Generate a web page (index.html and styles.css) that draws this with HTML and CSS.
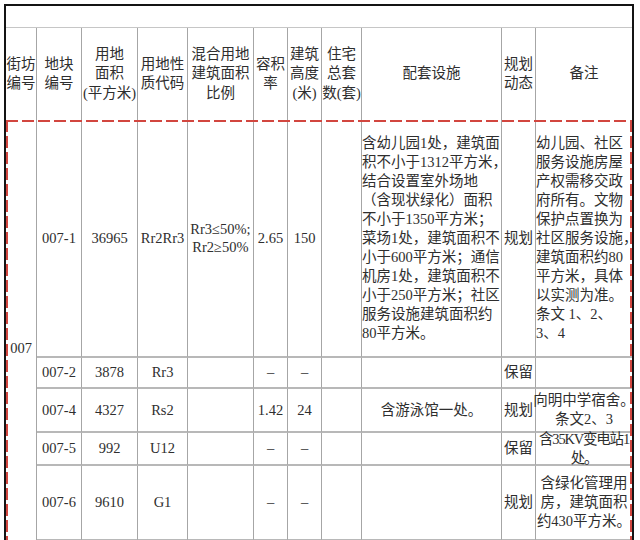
FILE: index.html
```html
<!DOCTYPE html>
<html lang="zh">
<head>
<meta charset="utf-8">
<title>地块规划表</title>
<link rel="stylesheet" href="styles.css">
</head>
<body>
<div class="sheet">
  <div class="blank"></div>
  <div class="hdr">
    <div><div class="t">街坊<br>编号</div></div>
    <div><div class="t">地块<br>编号</div></div>
    <div><div class="t">用地<br>面积<br>(平方米)</div></div>
    <div><div class="t">用地性<br>质代码</div></div>
    <div><div class="t">混合用地<br>建筑面积<br>比例</div></div>
    <div><div class="t">容积<br>率</div></div>
    <div><div class="t">建筑<br>高度<br>(米)</div></div>
    <div><div class="t">住宅<br>总套<br>数(套)</div></div>
    <div><div class="t">配套设施</div></div>
    <div><div class="t">规划<br>动态</div></div>
    <div><div class="t">备注</div></div>
  </div>
  <div class="data">
    <div class="c blk"><div class="t">007</div></div>

    <div class="c"><div class="t">007-1</div></div>
    <div class="c"><div class="t">36965</div></div>
    <div class="c"><div class="t">Rr2Rr3</div></div>
    <div class="c"><div class="t tight">Rr3≤50%;<br>Rr2≥50%</div></div>
    <div class="c"><div class="t">2.65</div></div>
    <div class="c"><div class="t">150</div></div>
    <div class="c"><div class="t"></div></div>
    <div class="c left"><div class="t">含幼儿园1处，建筑面<br>积不小于1312平方米，<br>结合设置室外场地<br>（含现状绿化）面积<br>不小于1350平方米；<br>菜场1处，建筑面积不<br>小于600平方米；通信<br>机房1处，建筑面积不<br>小于250平方米；社区<br>服务设施建筑面积约<br>80平方米。</div></div>
    <div class="c"><div class="t">规划</div></div>
    <div class="c left last"><div class="t">幼儿园、社区<br>服务设施房屋<br>产权需移交政<br>府所有。文物<br>保护点置换为<br>社区服务设施，<br>建筑面积约80<br>平方米，具体<br>以实测为准。<br>条文 1、2、<br>3、4</div></div>

    <div class="c"><div class="t">007-2</div></div>
    <div class="c"><div class="t">3878</div></div>
    <div class="c"><div class="t">Rr3</div></div>
    <div class="c"><div class="t"></div></div>
    <div class="c"><div class="t">–</div></div>
    <div class="c"><div class="t">–</div></div>
    <div class="c"><div class="t"></div></div>
    <div class="c"><div class="t"></div></div>
    <div class="c"><div class="t">保留</div></div>
    <div class="c last"><div class="t"></div></div>

    <div class="c"><div class="t">007-4</div></div>
    <div class="c"><div class="t">4327</div></div>
    <div class="c"><div class="t">Rs2</div></div>
    <div class="c"><div class="t"></div></div>
    <div class="c"><div class="t">1.42</div></div>
    <div class="c"><div class="t">24</div></div>
    <div class="c"><div class="t"></div></div>
    <div class="c"><div class="t">含游泳馆一处。</div></div>
    <div class="c"><div class="t">规划</div></div>
    <div class="c last"><div class="t">向明中学宿舍。<br>条文2、3</div></div>

    <div class="c"><div class="t">007-5</div></div>
    <div class="c"><div class="t">992</div></div>
    <div class="c"><div class="t">U12</div></div>
    <div class="c"><div class="t"></div></div>
    <div class="c"><div class="t">–</div></div>
    <div class="c"><div class="t">–</div></div>
    <div class="c"><div class="t"></div></div>
    <div class="c"><div class="t"></div></div>
    <div class="c"><div class="t">保留</div></div>
    <div class="c last"><div class="t squeeze">含35KV变电站1<br>处。</div></div>

    <div class="c"><div class="t">007-6</div></div>
    <div class="c"><div class="t">9610</div></div>
    <div class="c"><div class="t">G1</div></div>
    <div class="c"><div class="t"></div></div>
    <div class="c"><div class="t">–</div></div>
    <div class="c"><div class="t">–</div></div>
    <div class="c"><div class="t"></div></div>
    <div class="c"><div class="t"></div></div>
    <div class="c"><div class="t">规划</div></div>
    <div class="c last"><div class="t">含绿化管理用<br>房，建筑面积<br>约430平方米。</div></div>

    <div class="c"></div><div class="c"></div><div class="c"></div><div class="c"></div><div class="c"></div>
    <div class="c"></div><div class="c"></div><div class="c"></div><div class="c"></div><div class="c last"></div>
  </div>
</div>
</body>
</html>
```

FILE: styles.css
```css
* { box-sizing: border-box; }

html, body { background: #fff; }

body {
  margin: 0;
  font-family: "Liberation Serif", "Noto Sans CJK SC", serif;
  font-size: 14.5px;
  color: #2e2e2e;
}

.sheet {
  margin: 4px 0 0 4px;
  width: 630px;
  border: 2px solid #141414;
  border-bottom: none;
}

.blank {
  height: 22px;
  border-bottom: 1px solid #c6c6c6;
}

.hdr,
.data {
  display: grid;
  grid-template-columns: 31px 45px 56px 50px 66px 34px 34px 40px 140px 34px 96px;
}

.hdr {
  height: 92px;
}

.hdr > div {
  border-right: 1px solid #a6a6a6;
  display: flex;
  align-items: center;
  justify-content: center;
  text-align: center;
  line-height: 19.5px;
  white-space: nowrap;
  min-width: 0;
}

.hdr > div:last-child { border-right: none; }

.data {
  position: relative;
  grid-template-rows: 238px 31px 44px 33px 75px 36px;
}

.data::after {
  content: "";
  position: absolute;
  left: 0;
  right: 0;
  top: 0;
  bottom: 0;
  pointer-events: none;
  background:
    repeating-linear-gradient(90deg, #d2463f 0 12px, transparent 12px 16px) left top / 100% 2px no-repeat,
    repeating-linear-gradient(180deg, #d2463f 0 12px, transparent 12px 16px) left top / 2px 100% no-repeat,
    repeating-linear-gradient(180deg, #d2463f 0 12px, transparent 12px 16px) right top / 2px 100% no-repeat;
}

.c {
  border-right: 1px solid #a6a6a6;
  border-bottom: 2px solid #b8b8b8;
  display: flex;
  align-items: center;
  justify-content: center;
  text-align: center;
  white-space: nowrap;
  line-height: 19px;
  min-width: 0;
  min-height: 0;
}

.c.last { border-right: none; }

.c.left {
  justify-content: flex-start;
  text-align: left;
}

.c.blk {
  grid-row: span 6;
  border-bottom: none;
}

.t { flex: none; }

.t.tight { line-height: 18px; }

.t.squeeze { letter-spacing: -1.2px; }
```
